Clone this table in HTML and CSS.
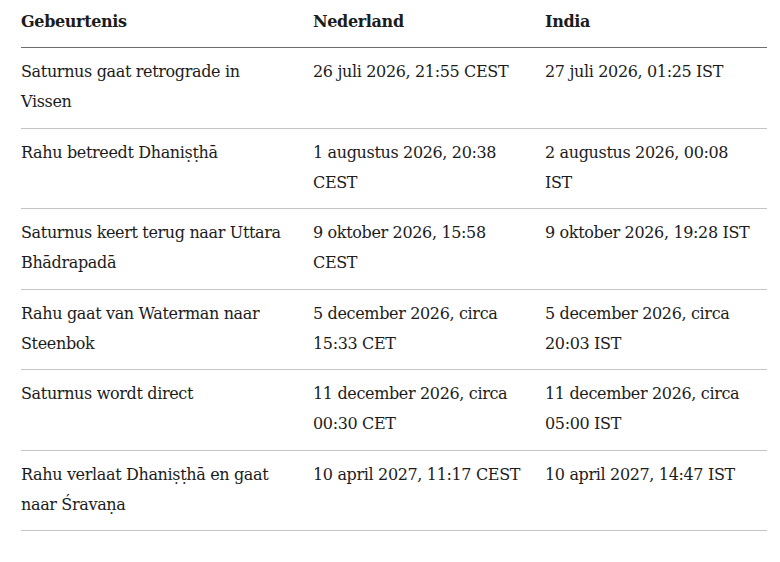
FILE: index.html
```html
<!DOCTYPE html>
<html lang="nl">
<head>
<meta charset="utf-8">
<link rel="stylesheet" href="styles.css">
</head>
<body>
<table class="events">
  <colgroup>
    <col class="c1">
    <col class="c2">
    <col class="c3">
  </colgroup>
  <thead>
    <tr><th>Gebeurtenis</th><th>Nederland</th><th>India</th></tr>
  </thead>
  <tbody>
    <tr><td>Saturnus gaat retrograde in Vissen</td><td>26 juli 2026, 21:55 CEST</td><td>27 juli 2026, 01:25 IST</td></tr>
    <tr><td>Rahu betreedt Dhaniṣṭhā</td><td>1 augustus 2026, 20:38 CEST</td><td>2 augustus 2026, 00:08 IST</td></tr>
    <tr><td>Saturnus keert terug naar Uttara Bhādrapadā</td><td>9 oktober 2026, 15:58 CEST</td><td>9 oktober 2026, 19:28 IST</td></tr>
    <tr><td>Rahu gaat van Waterman naar Steenbok</td><td>5 december 2026, circa 15:33 CET</td><td>5 december 2026, circa 20:03 IST</td></tr>
    <tr><td>Saturnus wordt direct</td><td>11 december 2026, circa 00:30 CET</td><td>11 december 2026, circa 05:00 IST</td></tr>
    <tr><td>Rahu verlaat Dhaniṣṭhā en gaat naar Śravaṇa</td><td>10 april 2027, 11:17 CEST</td><td>10 april 2027, 14:47 IST</td></tr>
  </tbody>
</table>
</body>
</html>
```
FILE: styles.css
```css
html, body {
  margin: 0;
  padding: 0;
  background: #fff;
}
body {
  padding: 0 13px 0 21px;
  font-family: "DejaVu Serif", "Liberation Serif", serif;
  font-size: 16px;
  letter-spacing: -0.35px;
  color: #1c1c1c;
}
.events {
  width: 746px;
  border-collapse: collapse;
  table-layout: fixed;
}
.c1 { width: 292px; }
.c2 { width: 232px; }
.c3 { width: 222px; }
.events th {
  text-align: left;
  font-weight: bold;
  line-height: 30px;
  padding: 7px 12px 10px 0;
  border-bottom: 1px solid #6e6e6e;
  vertical-align: top;
}
.events td {
  line-height: 30px;
  padding: 9px 12px 10.5px 0;
  border-bottom: 1px solid #c4c4c4;
  vertical-align: top;
}
.events td:first-child {
  padding-right: 26px;
}
```
